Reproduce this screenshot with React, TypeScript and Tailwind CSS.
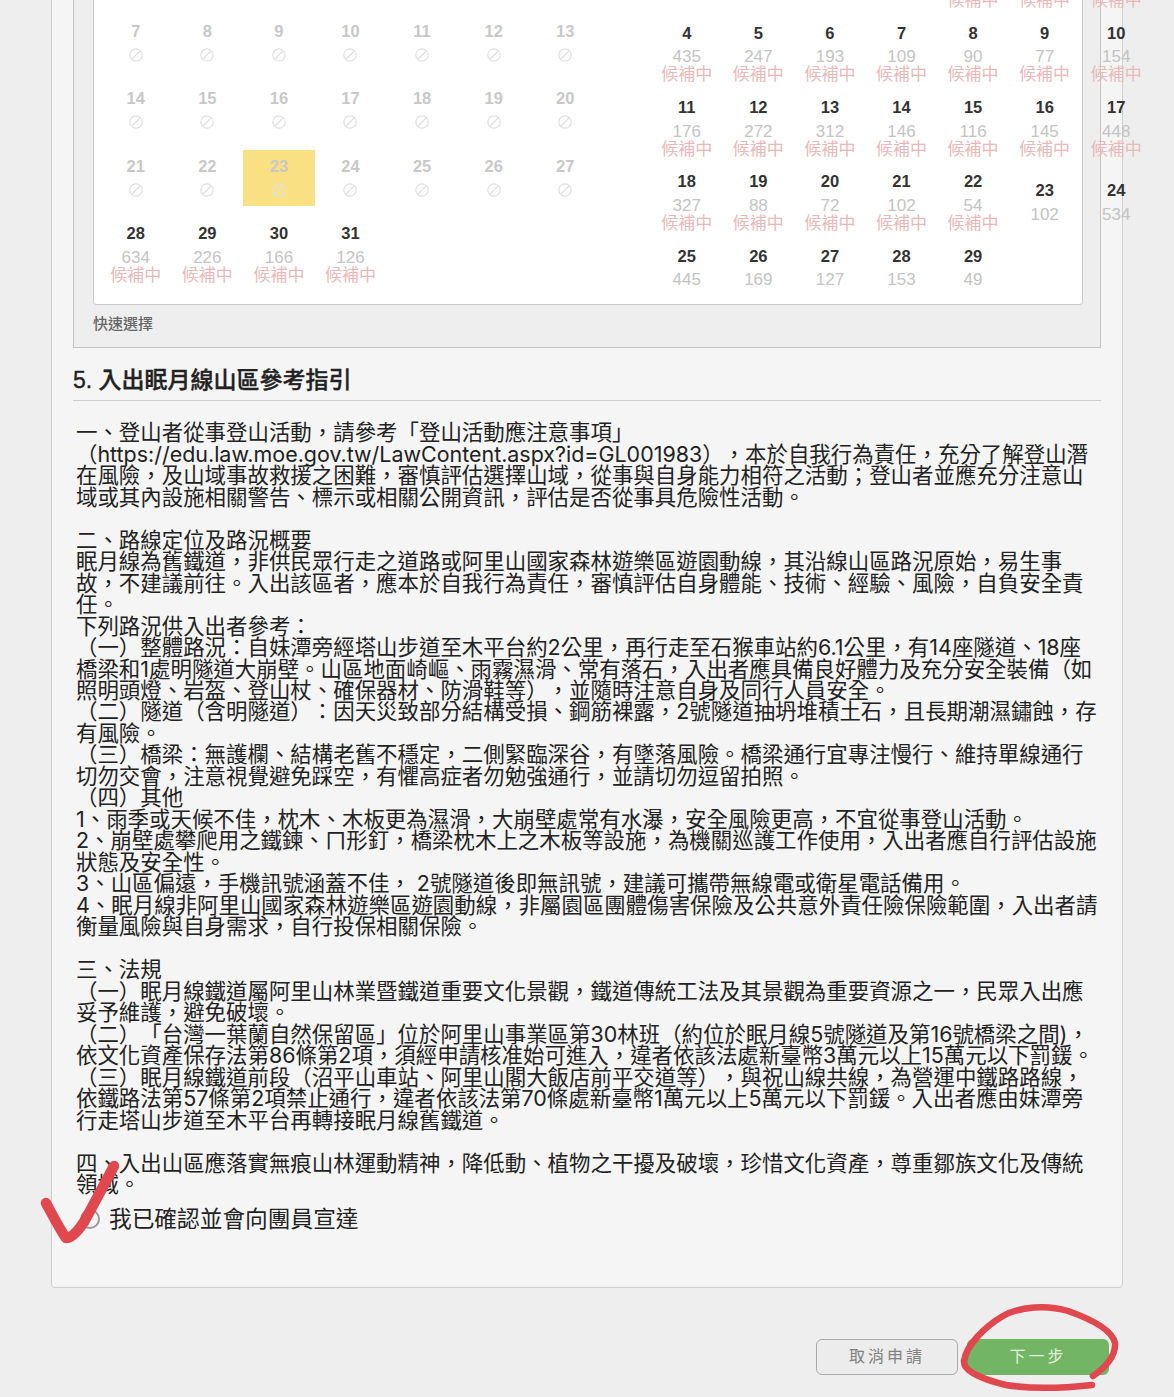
import { ReactNode } from "react";

type Day = { day?: number; count?: number; waitlist?: boolean; closed?: boolean };

const closedDays: Day[] = Array.from({ length: 21 }, (_, i) => ({ day: i + 7, closed: true }));

const firstMonth: Day[] = [
  ...closedDays,
  { day: 28, count: 634, waitlist: true },
  { day: 29, count: 226, waitlist: true },
  { day: 30, count: 166, waitlist: true },
  { day: 31, count: 126, waitlist: true },
];

const secondMonth: Day[] = [
  {},
  {},
  {},
  {},
  { day: 1, waitlist: true },
  { day: 2, waitlist: true },
  { day: 3, waitlist: true },
  { day: 4, count: 435, waitlist: true },
  { day: 5, count: 247, waitlist: true },
  { day: 6, count: 193, waitlist: true },
  { day: 7, count: 109, waitlist: true },
  { day: 8, count: 90, waitlist: true },
  { day: 9, count: 77, waitlist: true },
  { day: 10, count: 154, waitlist: true },
  { day: 11, count: 176, waitlist: true },
  { day: 12, count: 272, waitlist: true },
  { day: 13, count: 312, waitlist: true },
  { day: 14, count: 146, waitlist: true },
  { day: 15, count: 116, waitlist: true },
  { day: 16, count: 145, waitlist: true },
  { day: 17, count: 448, waitlist: true },
  { day: 18, count: 327, waitlist: true },
  { day: 19, count: 88, waitlist: true },
  { day: 20, count: 72, waitlist: true },
  { day: 21, count: 102, waitlist: true },
  { day: 22, count: 54, waitlist: true },
  { day: 23, count: 102 },
  { day: 24, count: 534 },
  { day: 25, count: 445 },
  { day: 26, count: 169 },
  { day: 27, count: 127 },
  { day: 28, count: 153 },
  { day: 29, count: 49 },
];

const guide = `一、登山者從事登山活動，請參考「登山活動應注意事項」
（https://edu.law.moe.gov.tw/LawContent.aspx?id=GL001983），本於自我行為責任，充分了解登山潛
在風險，及山域事故救援之困難，審慎評估選擇山域，從事與自身能力相符之活動；登山者並應充分注意山
域或其內設施相關警告、標示或相關公開資訊，評估是否從事具危險性活動。

二、路線定位及路況概要
眠月線為舊鐵道，非供民眾行走之道路或阿里山國家森林遊樂區遊園動線，其沿線山區路況原始，易生事
故，不建議前往。入出該區者，應本於自我行為責任，審慎評估自身體能、技術、經驗、風險，自負安全責
任。
下列路況供入出者參考：
（一）整體路況：自妹潭旁經塔山步道至木平台約2公里，再行走至石猴車站約6.1公里，有14座隧道、18座
橋梁和1處明隧道大崩壁。山區地面崎嶇、雨霧濕滑、常有落石，入出者應具備良好體力及充分安全裝備（如
照明頭燈、岩盔、登山杖、確保器材、防滑鞋等），並隨時注意自身及同行人員安全。
（二）隧道（含明隧道）：因天災致部分結構受損、鋼筋裸露，2號隧道抽坍堆積土石，且長期潮濕鏽蝕，存
有風險。
（三）橋梁：無護欄、結構老舊不穩定，二側緊臨深谷，有墜落風險。橋梁通行宜專注慢行、維持單線通行
切勿交會，注意視覺避免踩空，有懼高症者勿勉強通行，並請切勿逗留拍照。
（四）其他
1、雨季或天候不佳，枕木、木板更為濕滑，大崩壁處常有水瀑，安全風險更高，不宜從事登山活動。
2、崩壁處攀爬用之鐵鍊、ㄇ形釘，橋梁枕木上之木板等設施，為機關巡護工作使用，入出者應自行評估設施
狀態及安全性。
3、山區偏遠，手機訊號涵蓋不佳， 2號隧道後即無訊號，建議可攜帶無線電或衛星電話備用。
4、眠月線非阿里山國家森林遊樂區遊園動線，非屬園區團體傷害保險及公共意外責任險保險範圍，入出者請
衡量風險與自身需求，自行投保相關保險。

三、法規
（一）眠月線鐵道屬阿里山林業暨鐵道重要文化景觀，鐵道傳統工法及其景觀為重要資源之一，民眾入出應
妥予維護，避免破壞。
（二）「台灣一葉蘭自然保留區」位於阿里山事業區第30林班（約位於眠月線5號隧道及第16號橋梁之間)，
依文化資產保存法第86條第2項，須經申請核准始可進入，違者依該法處新臺幣3萬元以上15萬元以下罰鍰。
（三）眠月線鐵道前段（沼平山車站、阿里山閣大飯店前平交道等），與祝山線共線，為營運中鐵路路線，
依鐵路法第57條第2項禁止通行，違者依該法第70條處新臺幣1萬元以上5萬元以下罰鍰。入出者應由妹潭旁
行走塔山步道至木平台再轉接眠月線舊鐵道。

四、入出山區應落實無痕山林運動精神，降低動、植物之干擾及破壞，珍惜文化資產，尊重鄒族文化及傳統
領域。`;

function ClosedIcon() {
  return (
    <svg viewBox="0 0 14 14" className="mt-[9px] h-[14px] w-[14px] text-[#e0e0e0]" fill="none" stroke="currentColor" strokeWidth="1.2">
      <circle cx="7" cy="7" r="6.2" />
      <line x1="3" y1="11" x2="11" y2="3" />
    </svg>
  );
}

function DayCell({ item, selected }: { item: Day; selected?: boolean }) {
  if (item.day === undefined) return <div />;
  return (
    <div className={`flex flex-col items-center pt-[7.5px] ${selected ? "bg-[#f9e083]" : ""}`}>
      <div className={`text-[16.5px] leading-4 font-bold ${item.closed ? "text-[#c8c8c8]" : "text-[#333]"}`}>
        {item.day}
      </div>
      {item.closed ? (
        <div className="pb-[9.5px]">
          <ClosedIcon />
        </div>
      ) : (
        <>
          <div className="mt-[8.5px] h-4 text-[17px] leading-4 text-[#c4c4c4]">{item.count}</div>
          {item.waitlist && <div className="mt-px text-[17px] leading-[17px] text-[#e8b9b9]">候補中</div>}
        </>
      )}
    </div>
  );
}

function Month({ days, selectedDay, className }: { days: Day[]; selectedDay?: number; className: string }) {
  return (
    <div className={`grid w-[501px] shrink-0 grid-cols-7 items-center ${className}`}>
      {days.map((item, index) => (
        <DayCell key={index} item={item} selected={item.day === selectedDay} />
      ))}
    </div>
  );
}

function Button({ children, className }: { children: ReactNode; className: string }) {
  return (
    <button className={`h-9 w-[142px] rounded-[6px] text-[16px] tracking-[3px] ${className}`}>{children}</button>
  );
}

export default function App() {
  return (
    <div className="relative h-[1397px] overflow-hidden bg-[#eeeeee] [font-family:'Liberation_Sans','Noto_Sans_CJK_TC',sans-serif]">
      <div className="mx-[51px] mt-[-87px] rounded-b-[4px] border border-[#cfcfcf] bg-[#f5f5f5] px-[21px] pt-[15px] pb-[56px]">
        <section className="w-[1028px] border-r border-b border-l border-[#c4c4c4] bg-[#eeeeee] px-[19px]">
          <div className="flex w-[990px] items-start gap-[50px] rounded-b-[3px] border border-[#c9c9c9] bg-white pb-[16px] pl-[6px]">
            <Month days={firstMonth} selectedDay={23} className="mt-[85px] gap-y-[11.6px]" />
            <Month days={secondMonth} className="mt-[13px] gap-y-[8.3px]" />
          </div>
          <div className="mt-2 mb-3 text-[15px] leading-[22px] font-medium text-[#666]">快速選擇</div>
        </section>

        <h2 className="mt-[17px] w-[1028px] border-b border-[#cccccc] pb-[5px] text-[23px] leading-[30px] font-medium text-[#222] [-webkit-text-stroke:0.35px_#222]">
          5. 入出眠月線山區參考指引
        </h2>

        <p className="mt-[21px] ml-[3px] text-[21.45px] leading-[21.49px] whitespace-pre text-[#222] [font-family:Inter,'Noto_Sans_CJK_TC',sans-serif] [text-spacing-trim:space-all]">
          {guide}
        </p>

        <label className="mt-[11px] flex h-6 items-center gap-[9px] pl-[7px] text-[22.7px] text-[#222]">
          <span className="h-[20px] w-[20px] rounded-full border-2 border-[#9a9a9a] bg-[#f5f5f5]" />
          我已確認並會向團員宣達
        </label>
      </div>

      <div className="mt-[51px] mr-[65px] flex justify-end gap-[9px]">
        <Button className="border border-[#aaaaaa] bg-[#ececec] text-[#808080]">取消申請</Button>
        <Button className="bg-[#72b565] text-[#e3f2dc]">下一步</Button>
      </div>

      {/* hand drawn marks on top of the screenshot */}
      <svg viewBox="0 0 1174 1397" className="pointer-events-none absolute inset-0 h-[1397px] w-[1174px]" fill="none" stroke="#e0474f" strokeLinecap="round" strokeLinejoin="round">
        <path d="M46 1203 C52 1214 59 1228 66 1238 C72 1238 78 1231 84 1222 C94 1204 105 1183 114 1166" strokeWidth="10.5" />
        <path d="M1093 1376 C1105 1368 1116 1356 1115 1343 C1112 1329 1088 1318 1068 1311 C1048 1305 1020 1306 1003 1316 C984 1327 966 1346 964 1361 C963 1372 985 1380 1006 1385 C1030 1389 1065 1388 1092 1385" strokeWidth="6.5" />
      </svg>
    </div>
  );
}
